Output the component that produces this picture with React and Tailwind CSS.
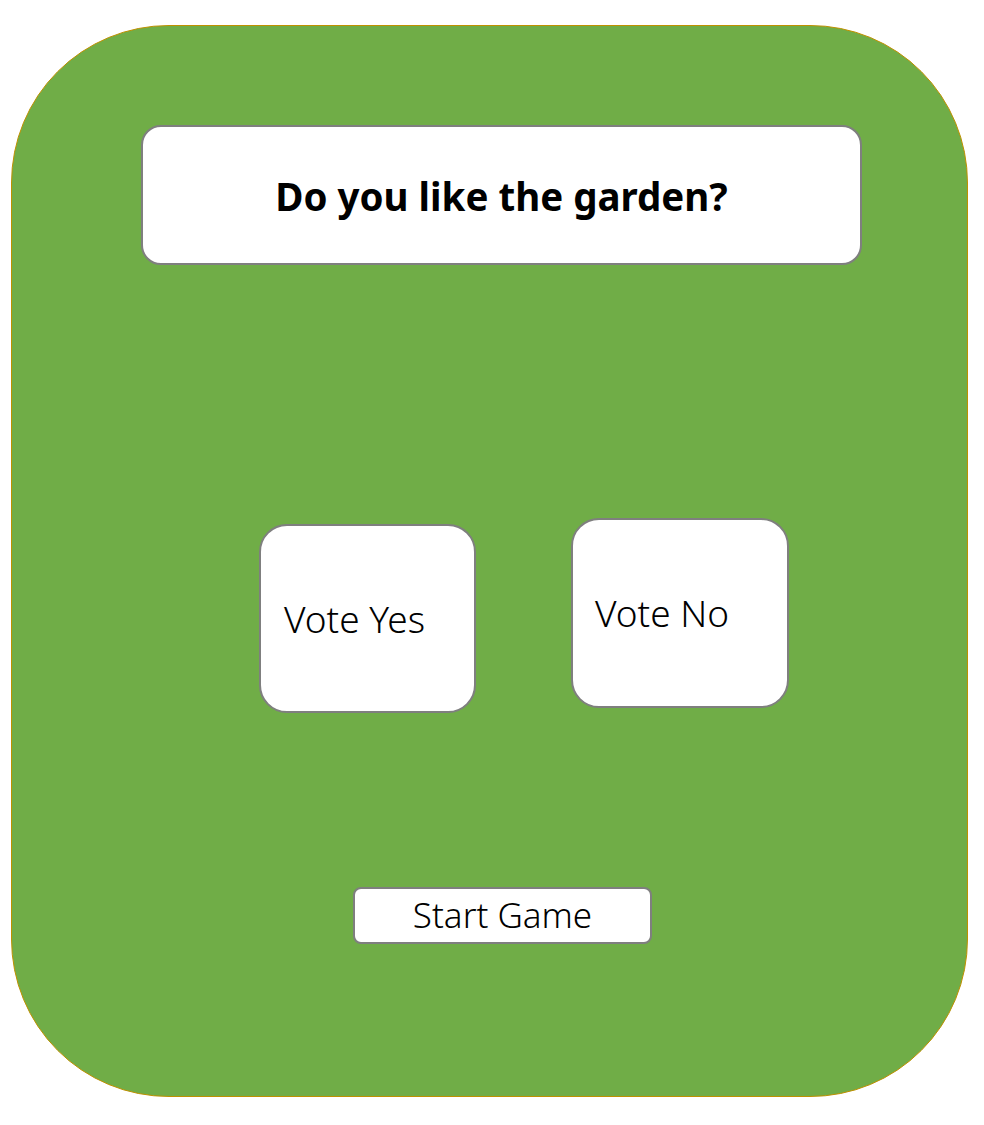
export default function App() {
  return (
    <div className="w-[984px] h-[1125px] bg-white pt-[25px] pl-[11px]">
      <div className="relative w-[957px] h-[1072px] rounded-[158px] bg-[#70ad47] border-[1.5px] border-[#bf9000] flex flex-col">
        {/* question */}
        <div className="ml-[129px] mt-[99px] w-[721px] h-[140px] rounded-[20px] bg-white border-2 border-[#7f7f7f] flex items-center justify-center">
          <h1 className="text-[38.5px] font-bold text-black font-['Noto_Sans',sans-serif] leading-none pt-[2px]">
            Do you like the garden?
          </h1>
        </div>

        {/* vote buttons */}
        <div className="flex items-start ml-[247px] mt-[253px] gap-[95px]">
          <button className="mt-[6px] w-[217px] h-[189px] rounded-[28px] bg-white border-2 border-[#7f7f7f] flex items-center pl-[23px] text-[37px] font-light text-black font-['Noto_Sans',sans-serif]">
            Vote Yes
          </button>
          <button className="w-[218px] h-[190px] rounded-[28px] bg-white border-2 border-[#7f7f7f] flex items-center pl-[22px] text-[37px] font-light text-black font-['Noto_Sans',sans-serif]">
            Vote No
          </button>
        </div>

        {/* start */}
        <button className="ml-[341px] mt-[174px] w-[299px] h-[57px] rounded-[8px] bg-white border-2 border-[#7f7f7f] flex items-center justify-center text-[35px] font-light text-black font-['Noto_Sans',sans-serif]">
          Start Game
        </button>
      </div>
    </div>
  );
}
